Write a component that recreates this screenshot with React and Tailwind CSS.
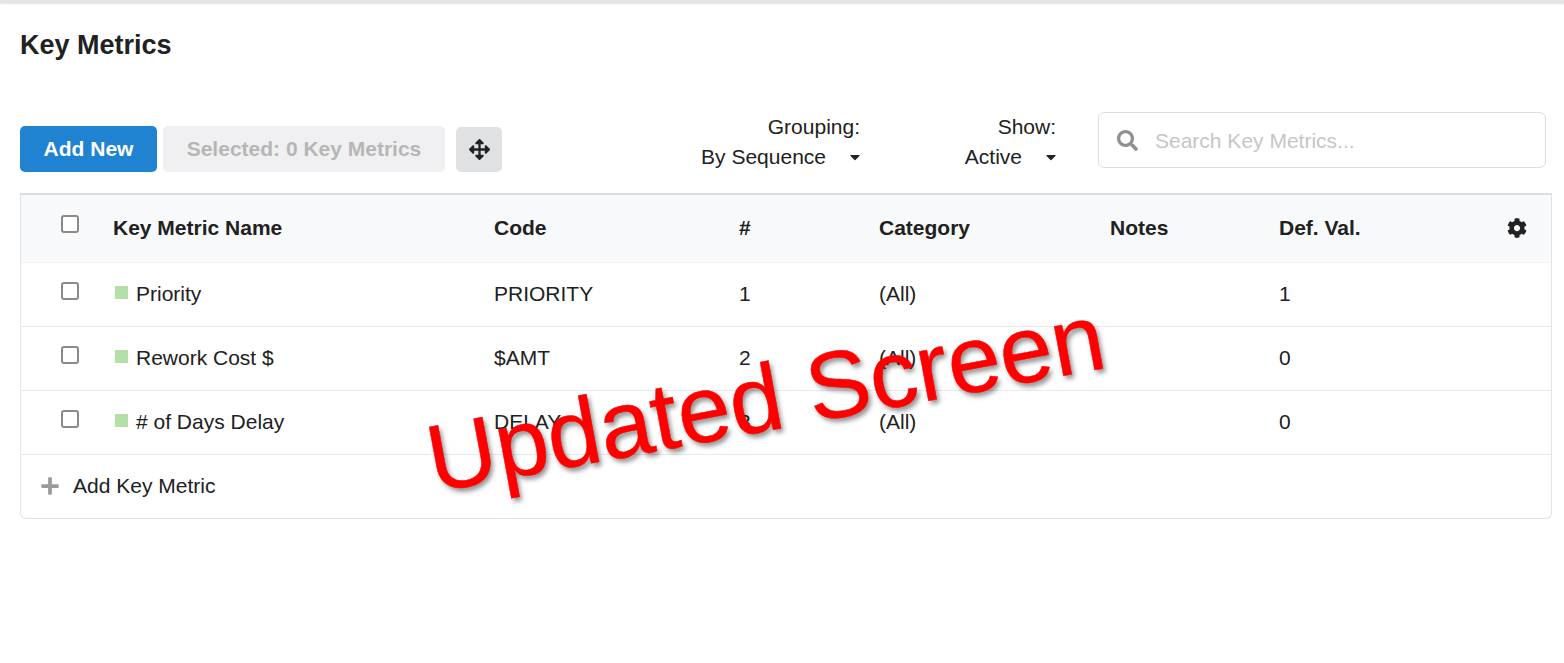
import React from 'react';
import { FaArrowsAlt, FaCaretDown, FaCog, FaPlus, FaSearch } from 'react-icons/fa';

const rowGrid = 'grid grid-cols-[92px_381px_245px_140px_231px_169px_1fr] items-center';

const metrics = [
    { name: 'Priority', code: 'PRIORITY', seq: '1', category: '(All)', def: '1' },
    { name: 'Rework Cost $', code: '$AMT', seq: '2', category: '(All)', def: '0' },
    { name: '# of Days Delay', code: 'DELAY', seq: '3', category: '(All)', def: '0' },
];

function Checkbox({ className }) {
    return (
        <div className={`ml-[40px] h-[18px] w-[18px] rounded-[3px] border-2 border-[#8a8a8a] bg-white ${className}`} />
    );
}

function Dropdown({ label, value, className }) {
    return (
        <div className={`flex flex-col items-end ${className}`}>
            <div className="h-[30px] leading-[30px]">{label}</div>
            <div className="flex h-[30px] items-center leading-[30px]">
                <span>{value}</span>
                <FaCaretDown className="ml-[21px] mr-[-3px] h-[16px] w-[16px] text-[#222]" />
            </div>
        </div>
    );
}

export default function App() {
    return (
        <div className="relative h-[663px] w-[1564px] overflow-hidden bg-white font-['Liberation_Sans',Arial,sans-serif] text-[21px] text-[#212121]">
            <div className="h-[3px] bg-[#e4e4e4] shadow-[0_1px_2px_rgba(0,0,0,0.12)]" />

            <h1 className="ml-[20px] mt-[25px] text-[27px] font-bold leading-[34px]">Key Metrics</h1>

            {/* Toolbar */}
            <div className="mt-[50px] flex items-start pl-[20px]">
                <div className="mt-[14px] flex h-[46px] w-[137px] items-center justify-center rounded-[5px] bg-[#2083d2] font-bold text-white">
                    Add New
                </div>
                <div className="ml-[6px] mt-[14px] flex h-[46px] w-[282px] items-center justify-center rounded-[5px] bg-[#f0f0f2] font-bold text-[#b6b6b6]">
                    Selected: 0 Key Metrics
                </div>
                <div className="ml-[11px] mt-[15px] flex h-[45px] w-[46px] items-center justify-center rounded-[5px] bg-[#e0e1e3]">
                    <FaArrowsAlt className="h-[21px] w-[21px] text-[#222]" />
                </div>
                <Dropdown label="Grouping:" value="By Sequence" className="ml-[198px] w-[160px]" />
                <Dropdown label="Show:" value="Active" className="ml-[96px] w-[100px]" />
                <div className="ml-[42px] flex h-[56px] w-[448px] items-center rounded-[6px] border border-[#dedede] bg-white pl-[18px]">
                    <FaSearch className="h-[21px] w-[21px] text-[#8f8f8f]" />
                    <span className="ml-[17px] mt-[1px] text-[#c6c6c6]">Search Key Metrics...</span>
                </div>
            </div>

            {/* Table */}
            <div className="ml-[20px] mt-[21px] w-[1532px] rounded-b-[6px] border border-t-2 border-[#e2e3e5] border-t-[#dcdddf]">
                <div className={`${rowGrid} h-[68px] border-b border-[#f0f1f3] bg-[#f8f9fa] pb-[1px] font-bold`}>
                    <Checkbox className="mb-[8px]" />
                    <div>Key Metric Name</div>
                    <div>Code</div>
                    <div>#</div>
                    <div>Category</div>
                    <div>Notes</div>
                    <div className="flex items-center justify-between pr-[24px]">
                        <span>Def. Val.</span>
                        <FaCog className="h-[20px] w-[20px] text-[#222]" />
                    </div>
                </div>
                {metrics.map(m => (
                    <div key={m.code} className={`${rowGrid} h-[64px] border-b border-[#e8e9eb] pb-[2px]`}>
                        <Checkbox className="mb-[6px]" />
                        <div className="flex items-center">
                            <span className="mb-[3px] ml-[2px] mr-[8px] h-[13px] w-[13px] bg-[#b5dfa8]" />
                            {m.name}
                        </div>
                        <div>{m.code}</div>
                        <div>{m.seq}</div>
                        <div>{m.category}</div>
                        <div />
                        <div>{m.def}</div>
                    </div>
                ))}
                <div className="flex h-[63px] items-center pb-[2px] pl-[19px]">
                    <FaPlus className="h-[20px] w-[20px] text-[#9a9a9a]" />
                    <span className="ml-[13px]">Add Key Metric</span>
                </div>
            </div>

            {/* Stamp over the table */}
            <div className="absolute left-[428px] top-[413px] origin-left -rotate-[10.5deg] whitespace-nowrap text-[95px] leading-none text-[#ff0000] [-webkit-text-stroke:0.5px_#ff0000] [text-shadow:2px_4px_5px_rgba(0,0,0,0.45)]">
                Updated Screen
            </div>
        </div>
    );
}
